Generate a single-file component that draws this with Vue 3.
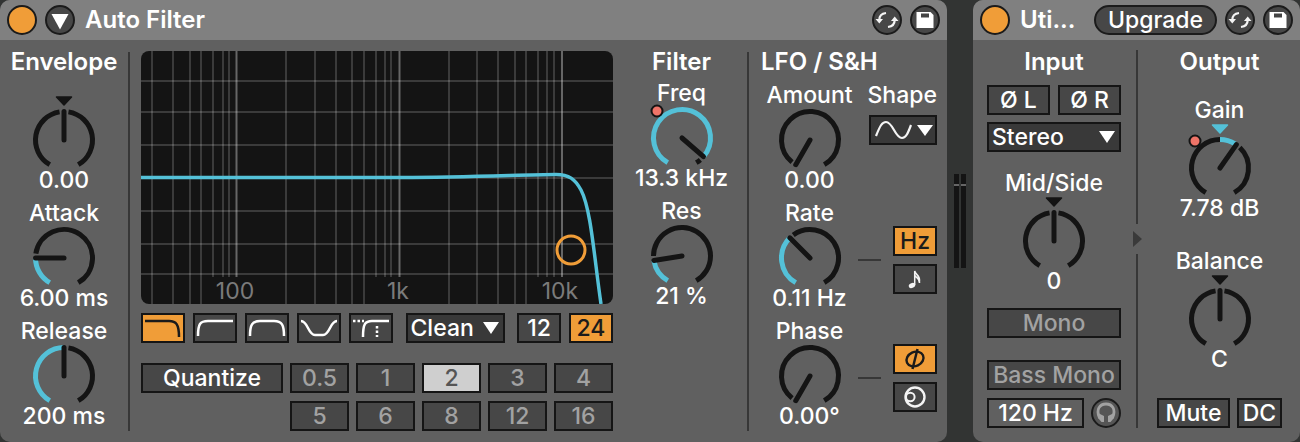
<script setup>
import { h, ref } from 'vue'

const CX = 32
const CY = 32
const R = 28.5

function point(angle, radius = R) {
  const rad = (angle * Math.PI) / 180
  return [CX + radius * Math.sin(rad), CY - radius * Math.cos(rad)]
}

function arc(from, to) {
  const [x1, y1] = point(from)
  const [x2, y2] = point(to)
  return `M${x1} ${y1}A${R} ${R} 0 ${to - from > 180 ? 1 : 0} 1 ${x2} ${y2}`
}

const INK = '#141414'
const BLUE = '#54c1d8'

/* Rotary control: angles run from -150 to 150 degrees, 0 pointing up. */
const Knob = (props) => {
  const { id, label, value, angle, bipolar, mapped, marker } = props
  const parts = []
  const track = (from, to, stroke) =>
    parts.push(h('path', { d: arc(from, to), stroke, 'stroke-width': 5, fill: 'none' }))
  if (bipolar) {
    track(-150, angle === 0 ? -9 : 0, INK)
    if (angle > 0) track(0, angle - 3, BLUE)
  } else if (angle > -150) {
    track(-150, angle, BLUE)
  }
  track(Math.min(angle + 9, 143), 150, INK)
  const [nx, ny] = point(angle)
  parts.push(
    h('path', { d: `M${CX} ${CY}L${nx} ${ny}`, stroke: INK, 'stroke-width': 5, 'stroke-linecap': 'round' })
  )
  if (bipolar) {
    const fill = marker || INK
    parts.push(
      h('path', { d: 'M24.5-11h15l-7.5 8z', fill, stroke: fill, 'stroke-width': 1.5, 'stroke-linejoin': 'round' })
    )
  }
  if (mapped) {
    parts.push(h('circle', { cx: 7, cy: 5, r: 5.5, fill: '#ef7468', stroke: INK, 'stroke-width': 2 }))
  }
  return h('div', { class: ['knob', { bipolar }] }, [
    label ? h('label', { for: id, class: 'knob-label' }, label) : null,
    h('div', { class: 'dial' }, [
      h('svg', { width: 64, height: 60, viewBox: '0 0 64 60', 'aria-hidden': 'true' }, parts),
      h('input', { id, type: 'range', min: -150, max: 150, value: angle, 'aria-label': label || 'Envelope' })
    ]),
    h('output', { for: id, class: 'knob-value' }, value)
  ])
}
Knob.props = ['id', 'label', 'value', 'angle', 'bipolar', 'mapped', 'marker']

const minorX = [11, 32, 49, 60, 145, 174, 195, 211, 223, 308, 336, 357, 374, 385]
const shortX = [72, 82, 88, 235, 244, 250, 397, 406, 413]
const majorX = [95.5, 258.5, 421]
const lineY = [30, 61, 94, 127, 160, 193, 223]

const shapes = [
  { name: 'Low-pass', d: 'M2 6H26C33 6 36 9 36 22' },
  { name: 'High-pass', d: 'M38 6H13C5 6 3 9 3 21' },
  { name: 'Band-pass', d: 'M3 21C3 10 5 6 13 6H27C35 6 37 10 37 21' },
  { name: 'Notch', d: 'M2 6C9 6 9 20 16 20H24C31 20 31 6 38 6' },
  { name: 'Morph', d: 'M38 6H21C14 6 12 9 12 22', dots: 'M2 6H13M26 11V22' }
]
const shape = ref('Low-pass')
const beats = ['0.5', '1', '2', '3', '4', '5', '6', '8', '12', '16']
const beat = ref('2')
const slope = ref('24')
const circuit = ref('Clean')
const channel = ref('Stereo')
const wave = ref('Sine')
const bass = ref('120 Hz')
</script>

<template>
  <main class="rack">
    <section class="panel" aria-label="Auto Filter">
      <header class="bar">
        <button class="round on" aria-label="Device on"></button>
        <button class="round" aria-label="Fold device">
          <svg width="30" height="30" viewBox="0 0 30 30"><path d="M6.500 9H23.500L15 24.500Z" fill="#fff" /></svg>
        </button>
        <h2>Auto Filter</h2>
        <button class="round" aria-label="Hot-swap">
          <svg width="30" height="30" viewBox="0 0 30 30" fill="none" stroke="#f4f4f4" stroke-width="2.200">
            <path d="M14 8C10 8.500 7.300 11 7.300 15M16 22C20 21.500 22.700 19 22.700 15" />
            <path d="M3.500 14H11L7.300 18.500ZM26.500 16H19L22.700 11.500Z" fill="#f4f4f4" stroke="none" />
          </svg>
        </button>
        <button class="round" aria-label="Save preset">
          <svg width="30" height="30" viewBox="0 0 30 30">
            <path d="M6.500 7H20.500L23.500 10V23H6.500Z" fill="#fff" />
            <path d="M11 8.500H19V12.500H11Z" fill="#444" />
          </svg>
        </button>
      </header>

      <div class="body filter-body">
        <div class="column">
          <h3>Envelope</h3>
          <div class="stack">
            <Knob id="envelope" value="0.00" :angle="0" :bipolar="true" />
            <Knob id="attack" label="Attack" value="6.00 ms" :angle="-90" />
            <Knob id="release" label="Release" value="200 ms" :angle="0" />
          </div>
        </div>
        <div class="divider"></div>

        <div class="display">
          <svg class="graph" viewBox="0 0 472 253" role="img" aria-label="Filter response">
            <rect width="472" height="253" fill="#141414" />
            <g stroke="#fff" stroke-opacity="0.170" stroke-width="2">
              <path v-for="x in minorX" :key="x" :d="`M${x} 0V253`" />
              <path v-for="x in shortX" :key="x" :d="`M${x} 0V226`" />
              <path v-for="y in lineY" :key="y" :d="`M0 ${y}H472`" />
            </g>
            <path v-for="x in majorX" :key="x" :d="`M${x} 0V226`" stroke="#fff" stroke-opacity="0.350" stroke-width="2" />
            <g class="axis" text-anchor="middle">
              <text x="94" y="248">100</text>
              <text x="257" y="248">1k</text>
              <text x="419" y="248">10k</text>
            </g>
            <path
              d="M0 126.500H260C330 126.500 385 123.500 415 123.500C428 123.500 434 128 440 139C450 158 453 205 460 253"
              fill="none" stroke="#54c1d8" stroke-width="3.500"
            />
            <circle cx="430" cy="199" r="14" fill="none" stroke="#f09d38" stroke-width="3" />
          </svg>

          <div class="row types">
            <div class="shapes">
              <button
                v-for="s in shapes" :key="s.name" class="btn" :class="{ active: shape === s.name }"
                :aria-label="s.name" @click="shape = s.name"
              >
                <svg width="40" height="26" viewBox="0 0 40 26" fill="none" stroke="currentColor" stroke-width="2.500">
                  <path :d="s.d" />
                  <path v-if="s.dots" :d="s.dots" stroke-dasharray="2.500 2" />
                </svg>
              </button>
            </div>
            <div class="select circuit">
              <select v-model="circuit" aria-label="Circuit type"><option>Clean</option><option>OSR</option></select>
              <svg width="18" height="14" viewBox="0 0 18 14"><path d="M1 1H17L9 13Z" fill="#fff" /></svg>
            </div>
            <div class="slopes">
              <button v-for="n in ['12', '24']" :key="n" class="btn" :class="{ active: slope === n }" @click="slope = n">{{ n }}</button>
            </div>
          </div>

          <div class="quantize">
            <button class="btn">Quantize</button>
            <div class="beats">
              <button v-for="b in beats" :key="b" class="btn dim" :class="{ chosen: beat === b }" @click="beat = b">{{ b }}</button>
            </div>
          </div>
        </div>

        <div class="column">
          <h3>Filter</h3>
          <div class="stack freq">
            <Knob id="freq" label="Freq" value="13.3 kHz" :angle="131" :mapped="true" />
            <Knob id="res" label="Res" value="21 %" :angle="-99" />
          </div>
        </div>
        <div class="divider"></div>

        <div class="lfo">
          <h3>LFO / S&amp;H</h3>
          <div class="lfo-row">
            <Knob id="amount" label="Amount" value="0.00" :angle="-150" />
            <div class="shape">
              <label for="wave">Shape</label>
              <div class="select wave">
                <svg width="64" height="27" viewBox="0 0 64 27" fill="none">
                  <path d="M5 19C9 9 11 5 15 5C22 5 24 21 31 21C35 21 37 16 40 8" stroke="#f4f4f4" stroke-width="2.200" />
                  <path d="M46 8H62L54 19Z" fill="#fff" />
                </svg>
                <select id="wave" v-model="wave"><option>Sine</option><option>Square</option></select>
              </div>
            </div>
          </div>
          <div class="lfo-row">
            <Knob id="rate" label="Rate" value="0.11 Hz" :angle="-45" />
            <div class="modes">
              <span class="dash"></span>
              <div class="pair">
                <button class="btn active">Hz</button>
                <button class="btn" aria-label="Tempo sync">
                  <svg width="40" height="26" viewBox="0 0 40 26" fill="none" stroke="#f4f4f4">
                    <ellipse cx="17" cy="19.500" rx="3.300" ry="2.500" fill="#f4f4f4" stroke="none" transform="rotate(-20 17 19.500)" />
                    <path d="M19.700 19V5C20.500 9 25 9 24.500 15M19.700 9C20.500 12 25 12 24.500 17" stroke-width="1.500" />
                  </svg>
                </button>
              </div>
            </div>
          </div>
          <div class="lfo-row">
            <Knob id="phase" label="Phase" value="0.00°" :angle="-150" />
            <div class="modes">
              <span class="dash"></span>
              <div class="pair">
                <button class="btn active" aria-label="Phase">
                  <svg width="40" height="26" viewBox="0 0 40 26" fill="none" stroke="currentColor" stroke-width="2.400">
                    <ellipse cx="20" cy="13" rx="8.800" ry="7" transform="rotate(-25 20 13)" />
                    <path d="M22.500 3L17.500 23" />
                  </svg>
                </button>
                <button class="btn" aria-label="Spin">
                  <svg width="40" height="26" viewBox="0 0 40 26" fill="none" stroke="#f4f4f4" stroke-width="2.400">
                    <circle cx="20" cy="13" r="9.500" />
                    <circle cx="15.300" cy="13" r="4.300" stroke-width="2" />
                  </svg>
                </button>
              </div>
            </div>
          </div>
        </div>
      </div>
    </section>

    <div class="meter" role="img" aria-label="Level meter"><i></i><i></i></div>

    <section class="panel" aria-label="Utility">
      <header class="bar">
        <button class="round on" aria-label="Device on"></button>
        <h2>Uti...</h2>
        <button class="upgrade">Upgrade</button>
        <button class="round" aria-label="Hot-swap">
          <svg width="30" height="30" viewBox="0 0 30 30" fill="none" stroke="#f4f4f4" stroke-width="2.200">
            <path d="M14 8C10 8.500 7.300 11 7.300 15M16 22C20 21.500 22.700 19 22.700 15" />
            <path d="M3.500 14H11L7.300 18.500ZM26.500 16H19L22.700 11.500Z" fill="#f4f4f4" stroke="none" />
          </svg>
        </button>
        <button class="round" aria-label="Save preset">
          <svg width="30" height="30" viewBox="0 0 30 30">
            <path d="M6.500 7H20.500L23.500 10V23H6.500Z" fill="#fff" />
            <path d="M11 8.500H19V12.500H11Z" fill="#444" />
          </svg>
        </button>
      </header>

      <div class="body utility-body">
        <div class="input">
          <h3>Input</h3>
          <div class="row invert">
            <button class="btn">Ø L</button>
            <button class="btn">Ø R</button>
          </div>
          <div class="select channel">
            <select v-model="channel" aria-label="Channel mode"><option>Stereo</option><option>Left</option></select>
            <svg width="18" height="14" viewBox="0 0 18 14"><path d="M1 1H17L9 13Z" fill="#fff" /></svg>
          </div>
          <Knob id="midside" label="Mid/Side" value="0" :angle="0" :bipolar="true" />
          <button class="btn dim mono">Mono</button>
          <button class="btn dim bass-mono">Bass Mono</button>
          <div class="row bass">
            <input v-model="bass" class="btn field" type="text" aria-label="Bass mono frequency" />
            <button class="round listen" aria-label="Audition">
              <svg width="30" height="30" viewBox="0 0 30 30">
                <path d="M8.500 20C4.500 11 9 6 15 6S25.500 11 21.500 20" fill="none" stroke="#a2a2a2" stroke-width="2.800" />
                <path d="M8 15.500L13 18V24H10.500L7 20ZM22 15.500L17 18V24H19.500L23 20Z" fill="#a2a2a2" />
              </svg>
            </button>
          </div>
        </div>
        <div class="split">
          <i></i>
          <svg width="9" height="16" viewBox="0 0 9 16"><path d="M0 0L9 8L0 16Z" fill="#3a3a3a" /></svg>
          <i></i>
        </div>
        <div class="output">
          <h3>Output</h3>
          <div class="out-knobs">
            <Knob id="gain" label="Gain" value="7.78 dB" :angle="35" :bipolar="true" :mapped="true" marker="#54c1d8" />
            <Knob id="balance" label="Balance" value="C" :angle="0" :bipolar="true" />
          </div>
          <div class="out-buttons">
            <button class="btn">Mute</button>
            <button class="btn">DC</button>
          </div>
        </div>
      </div>
    </section>
  </main>
</template>

<style>
body {
  background: #323433;
}
</style>

<style scoped>
.rack {
  display: grid;
  grid-template-columns: minmax(0, 947fr) 26px minmax(0, 327fr);
  background: #323433;
  color: #fff;
  font: 500 23px/24px Inter, "Liberation Sans", sans-serif;
}
.rack :deep(*) {
  box-sizing: border-box;
}
button,
select,
input {
  margin: 0;
  padding: 0;
  color: inherit;
  font: inherit;
}
h2,
h3 {
  margin: 0;
  font: inherit;
  font-size: 24px;
  font-weight: 600;
  white-space: nowrap;
}
svg {
  display: block;
}
.panel {
  display: flex;
  flex-direction: column;
  overflow: hidden;
  border-radius: 10px;
  background: #606060;
}
.bar {
  display: flex;
  align-items: center;
  gap: 8px;
  height: 40px;
  padding: 0 7px;
  background: #808080;
}
.bar h2 {
  flex: 1;
  padding-left: 2px;
}
.round {
  flex: none;
  width: 30px;
  height: 30px;
  border: 2px solid #1b1b1b;
  border-radius: 50%;
  background: #474747;
}
.round svg {
  margin: -2px;
}
.round.on {
  background: #f09d38;
}
.upgrade {
  height: 30px;
  padding: 0 12px;
  border: 2px solid #1b1b1b;
  border-radius: 15px;
  background: #474747;
}
.body {
  display: grid;
  flex: 1;
}
.filter-body {
  grid-template-columns: 128px 2px minmax(0, 1fr) 131px 2px 198px;
  padding: 10px 0 11px;
}
.column {
  text-align: center;
}
.divider {
  margin-top: 2px;
  background: #373737;
}
.stack {
  display: grid;
  gap: 9px;
  margin-top: 34px;
}
.stack.freq {
  margin-top: 7px;
}
.rack :deep(.knob) {
  display: flex;
  flex-direction: column;
  align-items: center;
  white-space: nowrap;
}
.rack :deep(.knob-label) {
  margin-bottom: 1px;
}
.rack :deep(.bipolar .knob-label) {
  margin-bottom: 14px;
}
.rack :deep(.dial) {
  position: relative;
  width: 64px;
  height: 60px;
}
.rack :deep(.dial svg) {
  display: block;
  overflow: visible;
}
.rack :deep(.dial input) {
  position: absolute;
  inset: 0;
  width: 100%;
  height: 100%;
  margin: 0;
  opacity: 0;
}
.display {
  padding: 1px 3px 0 11px;
}
.graph {
  width: 100%;
  height: auto;
  border-radius: 8px;
}
.axis {
  fill: #7b7b7b;
  font-size: 23px;
  font-weight: 400;
}
.row {
  display: flex;
}
.btn {
  display: flex;
  align-items: center;
  justify-content: center;
  height: 30px;
  border: 2px solid #151515;
  border-radius: 0;
  background: #474747;
  white-space: nowrap;
}
.btn.dim {
  color: #a2a2a2;
}
.btn.active {
  background: #f09d38;
  color: #1b1b1b;
}
.btn.chosen {
  background: #cfcfcf;
  color: #555;
}
.types {
  justify-content: space-between;
  margin-top: 9px;
}
.shapes,
.slopes {
  display: flex;
  gap: 8px;
}
.shapes .btn,
.slopes .btn {
  width: 44px;
}
.select {
  position: relative;
  height: 30px;
  border: 2px solid #151515;
  background: #393939;
}
.select select {
  width: 100%;
  height: 100%;
  padding-left: 3px;
  border: 0;
  appearance: none;
  background: none;
}
.select svg {
  position: absolute;
  top: 6px;
  right: 3px;
  pointer-events: none;
}
.circuit {
  width: 99px;
}
.quantize {
  display: grid;
  grid-template-columns: minmax(0, 142fr) minmax(0, 323fr);
  gap: 7px;
  margin-top: 20px;
}
.beats {
  display: grid;
  grid-template-columns: repeat(5, minmax(0, 1fr));
  gap: 8px 7px;
}
.lfo {
  display: grid;
  align-content: start;
  gap: 9px;
  padding: 0 10px 0 12px;
}
.lfo-row {
  display: grid;
  grid-template-columns: 97px minmax(0, 1fr);
}
.shape {
  display: flex;
  flex-direction: column;
  align-items: flex-end;
  gap: 8px;
}
.wave {
  width: 68px;
}
.wave svg {
  top: 0;
  right: 0;
}
.wave select {
  opacity: 0;
}
.modes {
  display: flex;
  align-items: center;
  align-self: start;
  justify-content: flex-end;
  gap: 12px;
  padding-top: 25px;
}
.dash {
  width: 26px;
  height: 2px;
  background: #373737;
}
.pair {
  display: grid;
  gap: 8px;
}
.pair .btn {
  width: 44px;
}
.meter {
  display: flex;
  justify-content: center;
  gap: 2px;
  margin-top: 174px;
}
.meter i {
  width: 5px;
  height: 94px;
  background: linear-gradient(#141414 10px, #666 10px, #666 12px, #141414 12px);
}
.utility-body {
  grid-template-columns: minmax(0, 134fr) 21px minmax(0, 155fr);
  padding: 10px 3px 14px 14px;
}
.input {
  display: flex;
  flex-direction: column;
  text-align: center;
}
.invert {
  gap: 8px;
  margin-top: 11px;
}
.invert .btn {
  flex: 1;
}
.channel {
  margin: 7px 0 19px;
}
.mono {
  margin-top: 15px;
}
.bass-mono {
  margin: 22px 0 8px;
}
.bass {
  gap: 7px;
}
.field {
  flex: 1;
  min-width: 0;
  background: #606060;
  text-align: center;
}
.listen {
  background: #555;
}
.split {
  display: flex;
  flex-direction: column;
  gap: 7px;
  padding-left: 12px;
}
.split i {
  flex: 1;
  width: 2px;
  margin-left: 3px;
  background: #373737;
}
.output {
  display: flex;
  flex-direction: column;
  text-align: center;
}
.out-knobs {
  display: grid;
  gap: 29px;
  margin: 24px 0 auto;
}
.out-buttons {
  display: grid;
  grid-template-columns: 73px 45px;
  justify-content: center;
  gap: 7px;
}
</style>
